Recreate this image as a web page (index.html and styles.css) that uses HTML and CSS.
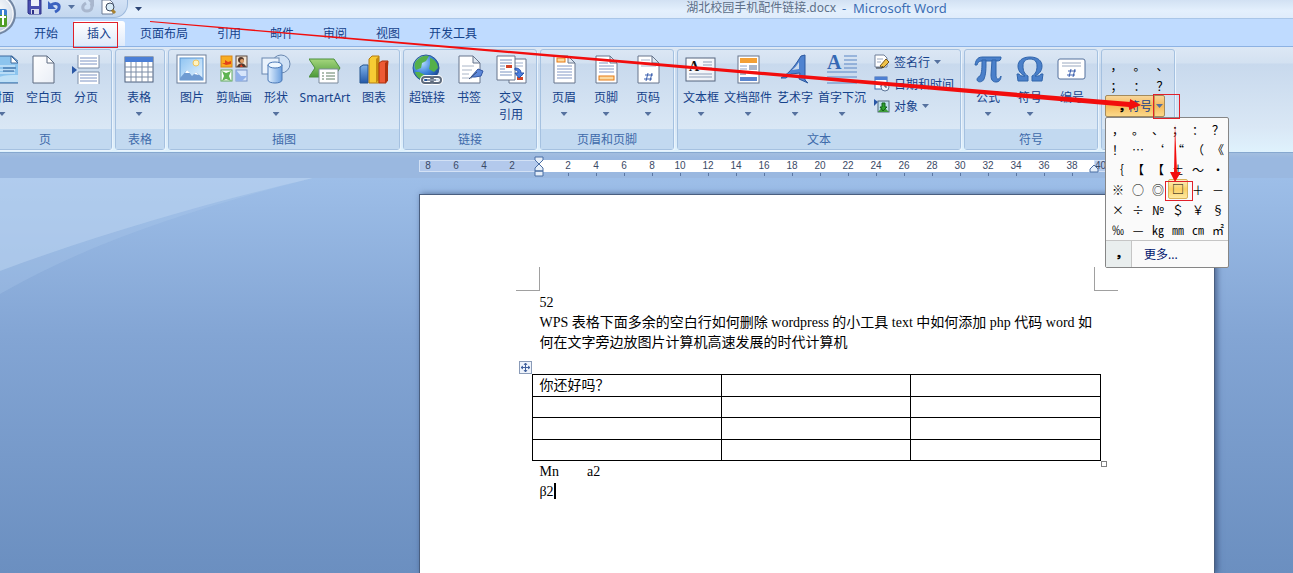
FILE: index.html
```html
<!DOCTYPE html>
<html lang="zh-CN">
<head>
    <meta charset="UTF-8">
    <meta name="viewport" content="width=device-width, initial-scale=1.0">
    <title>湖北校园手机配件链接.docx - Microsoft Word</title>
    <link rel="stylesheet" href="styles.css">
</head>
<body>
    <!-- Shared gradients -->
    <svg class="defs" width="0" height="0" aria-hidden="true">
        <defs>
            <linearGradient id="g-blue" x1="0" y1="0" x2="0" y2="1"><stop offset="0" stop-color="#7fb2ea"/><stop offset="1" stop-color="#2358a8"/></linearGradient>
            <linearGradient id="g-sky" x1="0" y1="0" x2="1" y2="1"><stop offset="0" stop-color="#8fc4f2"/><stop offset="1" stop-color="#e4f3ff"/></linearGradient>
            <linearGradient id="g-cyl" x1="0" y1="0" x2="1" y2="0"><stop offset="0" stop-color="#e3f1ff"/><stop offset="1" stop-color="#6a9fdf"/></linearGradient>
            <linearGradient id="g-green" x1="0" y1="0" x2="0" y2="1"><stop offset="0" stop-color="#a5d67d"/><stop offset="1" stop-color="#4c9a3a"/></linearGradient>
            <linearGradient id="g-paper" x1="0" y1="0" x2="1" y2="1"><stop offset="0" stop-color="#ffffff"/><stop offset="1" stop-color="#e9eef6"/></linearGradient>
            <radialGradient id="g-globe" cx="0.35" cy="0.3" r="0.8"><stop offset="0" stop-color="#b5dcff"/><stop offset="0.5" stop-color="#3f86dc"/><stop offset="1" stop-color="#123c86"/></radialGradient>
            <radialGradient id="g-orb" cx="0.5" cy="0.4" r="0.6"><stop offset="0" stop-color="#ffffff"/><stop offset="0.7" stop-color="#dbe3ee"/><stop offset="1" stop-color="#a9b8cc"/></radialGradient>
        </defs>
    </svg>

    <header class="titlebar">
        <button class="orb" type="button" aria-label="Office">
            <svg width="42" height="42" viewBox="0 0 42 42">
                <circle cx="21" cy="21" r="20" fill="url(#g-orb)" stroke="#7286a3" stroke-width="2"/>
                <circle cx="21" cy="21" r="18" fill="none" stroke="#fff"/>
                <rect x="20" y="16" width="13" height="9" rx="2" fill="#3b7fce"/>
                <rect x="22" y="22" width="11" height="12" rx="2" fill="#4f9d25"/>
                <path d="M29 17v15M24 24h8" fill="none" stroke="#fff" stroke-width="2"/>
            </svg>
        </button>
        <div class="quick-access">
            <button type="button" aria-label="保存">
                <svg width="16" height="16" viewBox="0 0 16 16"><path d="M2 0h13v14H3l-1-1z" fill="#4a4fb0" stroke="#2e3288"/><rect x="5" y="0" width="8" height="6" fill="#eef2fb"/><rect x="5" y="9" width="8" height="5" fill="#d5daec"/><rect x="6" y="10" width="2" height="4" fill="#2e3288"/></svg>
            </button>
            <button type="button" aria-label="撤消">
                <svg width="16" height="16" viewBox="0 0 16 16"><path d="M4 5c5-3 9-1 8 3 0 2-2 3-4 4" fill="none" stroke="#3a62c0" stroke-width="3"/><path d="M1 1v8h8z" fill="#3a62c0"/></svg>
            </button>
            <span class="arrow"></span>
            <button type="button" aria-label="重复">
                <svg width="16" height="16" viewBox="0 0 16 16"><path d="M6 3c-5 3-4 8 1 8s6-4 4-8" fill="none" stroke="#a9b7ce" stroke-width="3"/><path d="M8 0h6v7z" fill="#a9b7ce"/></svg>
            </button>
            <button type="button" aria-label="打印预览">
                <svg width="16" height="16" viewBox="0 0 16 16"><path d="M1 0h8l3 3v11H1z" fill="#fff" stroke="#6c7c97"/><circle cx="9" cy="7" r="4" fill="#d9ecf8" stroke="#3d4a60"/><path d="M11 10l3 3" stroke="#a98230" stroke-width="3"/></svg>
            </button>
        </div>
        <button class="customize" type="button" aria-label="自定义快速访问工具栏"><span class="arrow dark"></span></button>
        <h1 class="window-title"><span class="file-name">湖北校园手机配件链接.docx</span><span class="app-name">- &nbsp;Microsoft Word</span></h1>
    </header>

    <nav class="tabs">
        <button type="button">开始</button>
        <button type="button" class="active">插入</button>
        <button type="button">页面布局</button>
        <button type="button">引用</button>
        <button type="button">邮件</button>
        <button type="button">审阅</button>
        <button type="button">视图</button>
        <button type="button">开发工具</button>
    </nav>

    <section class="ribbon">
        <div class="group">
            <div class="tools">
                <button type="button" class="tool">
                    <svg viewBox="0 0 32 32"><path d="M4 2h22l8 7v20H4z" fill="#8cc4ee" stroke="#3f6a9e"/><path d="M25 2v7h7z" fill="#fff" stroke="#3f6a9e"/><path d="M7 12h22M7 16h22M7 19h22" stroke="#e6f4ff"/><path d="M17 14h13M17 17h11" stroke="#2c5c96"/><path d="M5 28c6-6 14-7 27-7v7z" fill="#bfe0f7"/></svg>
                    <span>封面</span><i class="arrow"></i>
                </button>
                <button type="button" class="tool">
                    <svg viewBox="0 0 32 32"><path d="M5 2h14l7 7v20H5z" fill="url(#g-paper)" stroke="#5d6b80"/><path d="M19 2v7h7z" fill="#fff" stroke="#5d6b80"/></svg>
                    <span>空白页</span>
                </button>
                <button type="button" class="tool">
                    <svg viewBox="0 0 32 32"><path d="M8 1h21v13H8zM8 18h21v12H8z" fill="#fff"/><path d="M8 1v13h21V1M8 30V18h21v12" fill="none" stroke="#7d8ea8"/><path d="M10 4h17M10 7h17M10 10h17M10 21h17M10 24h17M10 27h17" stroke="#7c94c4"/><path d="M2 12l5 4-5 4z" fill="#2a57a5"/></svg>
                    <span>分页</span>
                </button>
            </div>
            <h2>页</h2>
        </div>

        <div class="group">
            <div class="tools">
                <button type="button" class="tool">
                    <svg viewBox="0 0 32 32"><rect x="2" y="3" width="28" height="25" fill="#fff" stroke="#4c5f7d"/><rect x="2" y="3" width="28" height="5" fill="#4b7fd6"/><path d="M2 13h28M2 18h28M2 23h28M8 8v20M13 8v20M19 8v20M25 8v20" stroke="#7d8da6"/></svg>
                    <span>表格</span><i class="arrow"></i>
                </button>
            </div>
            <h2>表格</h2>
        </div>

        <div class="group">
            <div class="tools">
                <button type="button" class="tool">
                    <svg viewBox="0 0 32 32"><rect x="1" y="1" width="29" height="28" fill="#fff" stroke="#6d7f99"/><rect x="4" y="4" width="23" height="22" fill="url(#g-sky)" stroke="#5c95d0"/><circle cx="20" cy="9" r="3" fill="#fff3c0" stroke="#efc55e"/><path d="M4 24l7-8 5 6 4-4 7 6v2H4z" fill="#6f9bd2"/><path d="M9 19l2-3 3 3zM18 20l2-2 3 3z" fill="#fff"/></svg>
                    <span>图片</span>
                </button>
                <button type="button" class="tool">
                    <svg viewBox="0 0 32 32"><rect x="3" y="2" width="11" height="11" fill="#f8ad21" stroke="#d8861a"/><path d="M4 9h3V6l3 2 3-1v3l-5 1z" fill="#e1421a"/><rect x="18" y="2" width="11" height="11" fill="#f3e3cf" stroke="#5b4a42"/><circle cx="23" cy="6" r="3" fill="#54392c"/><circle cx="24" cy="7" r="2" fill="#e0a06a"/><path d="M19 13c1-5 8-5 9 0z" fill="#54392c"/><path d="M23 10l2 3h-3z" fill="#e2401e"/><rect x="3" y="16" width="11" height="11" fill="#fff" stroke="#5fa85a"/><path d="M4 17l4 2 5-2-2 5 2 5-5-2-4 2 2-5z" fill="#5fb552"/><rect x="18" y="16" width="11" height="11" fill="#d6e5fb" stroke="#7693c8"/><path d="M18 27V16l5 6 6 0-5 5z" fill="#8fb0ea"/></svg>
                    <span>剪贴画</span>
                </button>
                <button type="button" class="tool">
                    <svg viewBox="0 0 32 32"><circle cx="21" cy="10" r="9" fill="#cfe1f5" stroke="#6a88b0"/><rect x="2" y="4" width="17" height="16" fill="#e9f2fc" stroke="#6a88b0"/><path d="M8 11v15c0 4 14 4 14 0V11z" fill="url(#g-cyl)" stroke="#4a78b6"/><ellipse cx="15" cy="11" rx="7" ry="3" fill="#eef7ff" stroke="#4a78b6"/></svg>
                    <span>形状</span><i class="arrow"></i>
                </button>
                <button type="button" class="tool smart">
                    <svg viewBox="0 0 32 32"><path d="M0 5h25l6 9-6 9H0l6-9z" fill="url(#g-green)" stroke="#4c8f3d"/><path d="M10 15h19v14H10z" fill="#fff" stroke="#7c8b9c"/><path d="M13 19h2M13 22h2M13 25h2M17 19h9M17 22h9M17 25h9" stroke="#5e7f62"/></svg>
                    <span>SmartArt</span>
                </button>
                <button type="button" class="tool">
                    <svg viewBox="0 0 32 32"><path d="M2 13l3-2h5v18H2z" fill="url(#g-blue)" stroke="#25558f"/><path d="M11 5l3-3h7v27H11z" fill="#f7cb34" stroke="#b37a0e"/><path d="M18 5l3-3v24l-3 3z" fill="#c48910"/><path d="M21 9l3-2h6l-2 22h-7z" fill="#ee5a35" stroke="#a8300f"/><path d="M27 9l3-2v20l-3 2z" fill="#b0320f"/></svg>
                    <span>图表</span>
                </button>
            </div>
            <h2>插图</h2>
        </div>

        <div class="group">
            <div class="tools">
                <button type="button" class="tool">
                    <svg viewBox="0 0 32 32"><circle cx="15" cy="14" r="13" fill="url(#g-globe)" stroke="#2a5795"/><path d="M5 7c4-5 9-6 13-5l-3 5-4 2-1 5-5 2c-2-3-2-6 0-9zM19 4c5 1 8 6 8 10l-4 4-5-3 1-5zM8 18l6 3-2 5c-4-1-7-4-8-8z" fill="#55b04a"/><rect x="11" y="23" width="11" height="6" rx="3" fill="none" stroke="#fff" stroke-width="4"/><rect x="20" y="23" width="10" height="6" rx="3" fill="none" stroke="#fff" stroke-width="4"/><rect x="11" y="23" width="11" height="6" rx="3" fill="none" stroke="#5e6b7d" stroke-width="2"/><rect x="20" y="23" width="10" height="6" rx="3" fill="none" stroke="#5e6b7d" stroke-width="2"/><path d="M16 26h9" stroke="#8793a5" stroke-width="2"/></svg>
                    <span>超链接</span>
                </button>
                <button type="button" class="tool">
                    <svg viewBox="0 0 32 32"><path d="M6 2h14l7 7v20H6z" fill="#fff" stroke="#66758c"/><path d="M20 2v7h7z" fill="#dfe7f1" stroke="#66758c"/><path d="M9 12h12M9 16h10M9 20h7M9 24h10" stroke="#aab6c8"/><path d="M18 23l7-8 5 2-2 5-6 1z" fill="#5b86d8" stroke="#3056a4"/><path d="M16 25l8-7" stroke="#3b4f78"/></svg>
                    <span>书签</span>
                </button>
                <button type="button" class="tool">
                    <svg viewBox="0 0 32 32"><path d="M14 5h17v24H14z" fill="#fff" stroke="#66758c"/><path d="M18 9h10M18 12h10M18 21h10" stroke="#9fb1ce"/><rect x="22" y="23" width="6" height="3" fill="#d34427"/><path d="M2 2h18v24H2z" fill="#fff" stroke="#66758c"/><path d="M5 6h12M5 9h12M5 12h5M5 15h5M5 18h12M5 21h12" stroke="#7b93c0"/><rect x="11" y="11" width="6" height="3" fill="#d34427"/><path d="M20 14c4 0 6 2 6 5h3l-5 5-4-5h3c0-2-1-3-3-3z" fill="#4c7fe0" stroke="#2954ac" stroke-width="1"/></svg>
                    <span>交叉<br>引用</span>
                </button>
            </div>
            <h2>链接</h2>
        </div>

        <div class="group">
            <div class="tools">
                <button type="button" class="tool">
                    <svg viewBox="0 0 32 32"><path d="M6 2h14l7 7v20H6z" fill="#fff" stroke="#66758c"/><path d="M20 2v7h7z" fill="#dfe7f1" stroke="#66758c"/><rect x="9" y="4" width="8" height="4" fill="#fbd9a0" stroke="#e67a15"/><path d="M9 12h15M9 15h15M9 18h15M9 21h15M9 24h15" stroke="#8298c6"/></svg>
                    <span>页眉</span><i class="arrow"></i>
                </button>
                <button type="button" class="tool">
                    <svg viewBox="0 0 32 32"><path d="M6 2h14l7 7v20H6z" fill="#fff" stroke="#66758c"/><path d="M20 2v7h7z" fill="#dfe7f1" stroke="#66758c"/><path d="M9 6h9M9 9h9M9 12h15M9 15h15M9 18h15" stroke="#8298c6"/><rect x="9" y="22" width="15" height="4" fill="#fbd9a0" stroke="#e67a15"/></svg>
                    <span>页脚</span><i class="arrow"></i>
                </button>
                <button type="button" class="tool">
                    <svg viewBox="0 0 32 32"><path d="M6 2h14l7 7v20H6z" fill="#fff" stroke="#66758c"/><path d="M20 2v7h7z" fill="#dfe7f1" stroke="#66758c"/><path d="M9 6h9M9 9h9M9 12h15" stroke="#a5b3cd"/><path d="M16 19l-2 8M20 19l-2 8M13 21h8M12 25h8" stroke="#3b5fae"/></svg>
                    <span>页码</span><i class="arrow"></i>
                </button>
            </div>
            <h2>页眉和页脚</h2>
        </div>

        <div class="group">
            <div class="tools">
                <button type="button" class="tool">
                    <svg viewBox="0 0 32 32"><rect x="1" y="4" width="29" height="23" fill="url(#g-paper)" stroke="#55657e"/><path d="M18 8h9M18 11h9M18 14h9M4 20h23M4 23h23" stroke="#8f9fb9"/><text x="4" y="17" class="glyph letter">A</text></svg>
                    <span>文本框</span><i class="arrow"></i>
                </button>
                <button type="button" class="tool wide">
                    <svg viewBox="0 0 32 32"><rect x="6" y="2" width="21" height="27" fill="#fff" stroke="#66758c"/><rect x="8" y="4" width="17" height="5" fill="#f3a035"/><path d="M8 12h7M8 15h7M18 12h7M8 18h17" stroke="#8fa3c4"/><rect x="17" y="11" width="8" height="5" fill="#a9b6ca"/><rect x="8" y="17" width="6" height="4" fill="#a9b6ca"/><rect x="8" y="23" width="17" height="4" fill="#5b86cf"/></svg>
                    <span>文档部件</span><i class="arrow"></i>
                </button>
                <button type="button" class="tool">
                    <svg viewBox="0 0 32 32"><path d="M2 24C12 18 17 10 22 2l4-1v25l3 3-9-4 1-6-9 1-5 4z" fill="#4f83d0" stroke="#2c589f"/><path d="M13 16c3-2 5-5 7-8v7z" fill="#c9d9ec"/></svg>
                    <span>艺术字</span><i class="arrow"></i>
                </button>
                <button type="button" class="tool wide">
                    <svg viewBox="0 0 32 32"><text x="1" y="15" class="glyph drop-cap">A</text><path d="M18 2h13M18 6h13M18 10h13M18 14h13M1 18h30M1 23h30M1 29h30" stroke="#5b86c4"/></svg>
                    <span>首字下沉</span><i class="arrow"></i>
                </button>
                <div class="small-tools">
                    <button type="button">
                        <svg viewBox="0 0 16 16"><path d="M1 1h9l3 3v9H1z" fill="#fff" stroke="#6f7f98"/><path d="M3 5h6M3 8h4" stroke="#9aa8bf"/><path d="M6 12l6-7 3 3-6 6z" fill="#f0c247" stroke="#77561a"/><path d="M2 14h6l1-2" fill="none" stroke="#333"/></svg>
                        签名行<i class="arrow"></i>
                    </button>
                    <button type="button">
                        <svg viewBox="0 0 16 16"><rect x="1" y="1" width="12" height="12" fill="#fff" stroke="#3f68ae"/><rect x="1" y="1" width="12" height="3" fill="#4d7fd2"/><path d="M4 7h3v4M9 6v4" fill="none" stroke="#3f68ae"/><circle cx="11" cy="11" r="4" fill="#eef5fd" stroke="#5d7698"/><path d="M11 8v3h2" fill="none" stroke="#345"/></svg>
                        日期和时间
                    </button>
                    <button type="button">
                        <svg viewBox="0 0 16 16"><rect x="4" y="3" width="11" height="11" fill="#bfe0ee" stroke="#53687f"/><path d="M4 14l5-6 6 6z" fill="#3f9b3a"/><path d="M8 5h3v4h2l-4 4-3-4h2z" fill="#2fa12d" stroke="#12601a"/><path d="M0 1l4 3-4 4z" fill="#2a57a5"/></svg>
                        对象<i class="arrow"></i>
                    </button>
                </div>
            </div>
            <h2>文本</h2>
        </div>

        <div class="group">
            <div class="tools">
                <button type="button" class="tool">
                    <svg viewBox="0 0 32 32"><path d="M3 11c1-7 4-8 8-8h18c0 3-1 4-4 4H11c-4 0-5 1-6 4z" fill="#4a80ca" stroke="#2f64ab"/><path d="M10 6h4c0 9 0 14-2 19-1 3-6 4-7 1 0-2 1-3 3-4 2-3 2-9 2-16zM20 6h4v14c0 4 1 5 2 5s2-1 3-3c0 4-2 6-5 6-4 0-5-3-5-7z" fill="#4a80ca" stroke="#2f64ab"/></svg>
                    <span>公式</span><i class="arrow"></i>
                </button>
                <button type="button" class="tool">
                    <svg viewBox="0 0 32 32"><path d="M3 20h2c1 2 2 2 5 2h1c-4-2-7-5-7-10 0-5 4-9 12-9s12 4 12 9c0 5-3 8-7 10h1c3 0 4 0 5-2h2l-1 7H18v-5c4-2 5-6 5-10 0-4-2-7-7-7s-7 3-7 7c0 4 1 8 5 10v5H4z" fill="#4a80ca" stroke="#2f64ab"/></svg>
                    <span>符号</span><i class="arrow"></i>
                </button>
                <button type="button" class="tool">
                    <svg viewBox="0 0 32 32"><rect x="2" y="5" width="27" height="20" rx="2" fill="#fff" stroke="#55719c"/><path d="M6 9h19M6 12h19" stroke="#9aa9c0"/><path d="M15 15l-2 8M19 15l-2 8M12 17h8M11 21h8" stroke="#3b5fae"/></svg>
                    <span>编号</span>
                </button>
            </div>
            <h2>符号</h2>
        </div>

        <div class="group symbols">
            <div class="quick-symbols">
                <button type="button">，</button><button type="button">。</button><button type="button">、</button>
                <button type="button">；</button><button type="button">：</button><button type="button">？</button>
            </div>
            <div class="split">
                <button type="button" class="split-main"><b>❟</b>符号</button>
                <button type="button" class="split-arrow" aria-label="更多符号"><i class="arrow"></i></button>
                <div class="symbol-menu">
                    <div class="symbol-grid">
                        <button type="button">，</button><button type="button">。</button><button type="button">、</button><button type="button">；</button><button type="button">：</button><button type="button">？</button>
                        <button type="button">！</button><button type="button">…</button><button type="button">‘</button><button type="button">“</button><button type="button">（</button><button type="button">《</button>
                        <button type="button">｛</button><button type="button">【</button><button type="button">【</button><button type="button">±</button><button type="button">～</button><button type="button">·</button>
                        <button type="button">※</button><button type="button">○</button><button type="button">◎</button><button type="button" class="hot">□</button><button type="button">＋</button><button type="button">－</button>
                        <button type="button">×</button><button type="button">÷</button><button type="button">№</button><button type="button">＄</button><button type="button">￥</button><button type="button">§</button>
                        <button type="button">‰</button><button type="button">—</button><button type="button">㎏</button><button type="button">㎜</button><button type="button">㎝</button><button type="button">㎡</button>
                    </div>
                    <button type="button" class="more"><b>❟</b><span>更多...</span></button>
                </div>
            </div>
            <h2></h2>
        </div>
    </section>

    <div class="ruler-row">
        <div class="ruler">
            <div class="ruler-margin"><span>8</span><span>6</span><span>4</span><span>2</span></div>
            <div class="ruler-body">
                <span>2</span><span>4</span><span>6</span><span>8</span><span>10</span><span>12</span><span>14</span><span>16</span><span>18</span><span>20</span><span>22</span><span>24</span><span>26</span><span>28</span><span>30</span><span>32</span><span>34</span><span>36</span><span>38</span>
                <svg class="indent indent-left" width="10" height="22" viewBox="0 0 10 22"><path d="M1 1h8v3l-4 4-4-4zM5 8l4 4v3H1v-3zM1 15h8v5H1z" fill="#e6effa" stroke="#4b6ea3"/></svg>
                <svg class="indent indent-right" width="10" height="9" viewBox="0 0 10 9"><path d="M5 1l4 4v3H1V5z" fill="#e6effa" stroke="#4b6ea3"/></svg>
            </div>
            <div class="ruler-margin right">40</div>
        </div>
    </div>

    <main class="workspace">
        <svg class="swoosh" width="313" height="116" viewBox="0 0 313 116">
            <path d="M0 0h313C220 24 100 58 0 116z" fill="#b5d0ee" opacity="0.25"/>
            <path d="M0 0h313C220 22 110 52 0 93z" fill="#bdd6f1" opacity="0.5"/>
        </svg>
        <article class="page">
            <span class="corner corner-left"></span>
            <span class="corner corner-right"></span>
            <p>52</p>
            <p>WPS 表格下面多余的空白行如何删除 wordpress 的小工具 text 中如何添加 php 代码 word 如何在文字旁边放图片计算机高速发展的时代计算机</p>
            <div class="table-wrap">
                <svg class="move-handle" width="13" height="13" viewBox="0 0 13 13"><rect x="0.5" y="0.5" width="12" height="12" fill="#eef3fb" stroke="#8a9bb8"/><path d="M6.5 2v9M2 6.5h9M5 4l1.500-2L8 4M5 9l1.500 2L8 9M4 5L2 6.500 4 8M9 5l2 1.500L9 8" fill="none" stroke="#3f5f9c"/></svg>
                <table>
                    <tr><td>你还好吗？</td><td></td><td></td></tr>
                    <tr><td></td><td></td><td></td></tr>
                    <tr><td></td><td></td><td></td></tr>
                    <tr><td></td><td></td><td></td></tr>
                </table>
                <span class="resize-handle"></span>
            </div>
            <p>Mn<span class="tabbed">a2</span></p>
            <p>β2<span class="caret"></span></p>
        </article>
    </main>

    <!-- Red callouts over the window -->
    <svg class="callouts" width="1293" height="573" viewBox="0 0 1293 573" aria-hidden="true">
        <rect x="73.5" y="22.500" width="44" height="25" fill="none" stroke="#e0202a"/>
        <path d="M150 21L680 65 1130 102v-3l11 6-12 5v-3L680 68 150 22z" fill="#f20d0d"/>
        <rect x="1153.5" y="94.500" width="26" height="24" fill="none" stroke="#e0202a"/>
        <path d="M1175 124l2 48h4l-6 10-5-10h4z" fill="#f20d0d"/>
        <rect x="1165.5" y="181.500" width="27" height="19" fill="none" stroke="#e0202a"/>
    </svg>
</body>
</html>
```

FILE: styles.css
```css
* {
    margin: 0;
    padding: 0;
    box-sizing: border-box;
}

body {
    position: relative;
    display: flex;
    flex-direction: column;
    min-height: 100vh;
    overflow: hidden;
    background: #9ab8e0;
    color: #15428b;
    font-family: "Noto Sans", "Noto Sans CJK SC", sans-serif;
    font-size: 12px;
    line-height: 17px;
}

button {
    border: none;
    background: none;
    color: inherit;
    font: inherit;
    white-space: nowrap;
}

svg {
    display: block;
    flex: none;
}

.defs {
    position: absolute;
}

.arrow {
    display: block;
    width: 7px;
    height: 4px;
    background: #55719f;
    clip-path: polygon(0 0, 100% 0, 50% 100%);
}

/* Title bar */
.titlebar {
    position: relative;
    display: flex;
    height: 19px;
    padding-left: 15px;
    background: linear-gradient(#d2e1f3, #e4f0fd 60%, #dfecfb);
    border-bottom: 1px solid #a9c6e8;
}

.orb {
    position: absolute;
    left: -26px;
    top: -7px;
    z-index: 2;
}

.quick-access {
    display: flex;
    align-items: flex-start;
    gap: 5px;
    height: 18px;
    padding: 0 10px 0 11px;
    background: linear-gradient(#d3e2f5, #c3d7ef);
    border: 1px solid #9db9dc;
    border-width: 0 1px 1px 0;
    border-radius: 0 0 14px 0;
}

.quick-access .arrow {
    margin-top: 5px;
}

.customize {
    width: 21px;
    padding-left: 7px;
}

.arrow.dark {
    background: #2b4474;
}

.window-title {
    position: absolute;
    left: 340px;
    right: 0;
    display: flex;
    justify-content: center;
    gap: 6px;
    line-height: 16px;
    font-weight: 400;
}

.file-name {
    color: #5d6f88;
    font-size: 12px;
}

.app-name {
    color: #3c6eb4;
    font-size: 13px;
}

/* Tabs */
.tabs {
    display: flex;
    gap: 1px;
    height: 28px;
    padding: 2px 0 0 20px;
    background: #bfdbff;
    border-bottom: 1px solid #8db2e3;
}

.tabs button {
    padding: 0 14px;
}

.tabs .active {
    background: linear-gradient(#ffffff, #dfeafa);
    border-radius: 3px 3px 0 0;
}

/* Ribbon */
.ribbon {
    display: flex;
    gap: 3px;
    height: 106px;
    margin-left: -22px;
    padding: 2px 0 2px;
    background: linear-gradient(#dde8f5, #d3e1f1 16px, #c8d9ed 17px, #d9e7f5 80px, #dff2fd);
    border-bottom: 1px solid #86a8cf;
}

.group {
    display: flex;
    flex-direction: column;
    border: 1px solid #a5c1e0;
    border-radius: 3px;
    box-shadow: 1px 1px 0 #eaf4fd;
}

.tools {
    display: flex;
    flex: 1;
    padding: 0 4px 0 2px;
}

.group h2 {
    height: 20px;
    background: #c2d9f0;
    color: #3e6aaa;
    font-size: 12px;
    line-height: 22px;
    font-weight: 400;
    text-align: center;
}

.tool {
    display: flex;
    flex-direction: column;
    align-items: center;
    width: 42px;
    padding-top: 4px;
}

.tool.wide {
    width: 52px;
}

.tool.smart {
    width: 56px;
}

.tool svg {
    width: 32px;
    height: 32px;
    margin-bottom: 3px;
}

.tool .arrow {
    margin-top: 6px;
}

.glyph {
    font-family: "Liberation Serif", serif;
    font-weight: 700;
}

.letter {
    fill: #111;
    font-size: 14px;
}

.drop-cap {
    fill: #3569b4;
    font-size: 20px;
}

.small-tools {
    display: flex;
    flex-direction: column;
    width: 88px;
    padding: 1px 0 0 6px;
}

.small-tools button {
    display: flex;
    align-items: center;
    gap: 4px;
    height: 22px;
}

.small-tools svg {
    width: 16px;
    height: 16px;
}

/* Custom symbol group */
.symbols {
    width: 74px;
    padding: 5px 0 0 3px;
}

.quick-symbols {
    display: grid;
    grid-template-columns: repeat(3, 23px);
    grid-auto-rows: 20px;
    color: #000;
}

.symbols h2 {
    margin: auto 0 0 -3px;
}

.split {
    position: relative;
    display: flex;
    width: 60px;
    height: 22px;
    background: linear-gradient(#f7d69a, #f5b95a 50%, #fbd98a);
    border: 1px solid #a48b5c;
    border-radius: 2px;
}

.split-main {
    display: flex;
    align-items: center;
    justify-content: flex-end;
    gap: 4px;
    width: 48px;
    padding-right: 2px;
}

.split-main b,
.more b {
    color: #000;
    font-family: "DejaVu Sans", sans-serif;
    font-size: 10px;
}

.split-arrow {
    display: flex;
    flex: 1;
    align-items: center;
    justify-content: center;
    border-left: 1px solid #c99a4c;
}

.symbol-menu {
    position: absolute;
    top: 21px;
    left: -1px;
    z-index: 5;
    width: 124px;
    background: #fafafa;
    border: 1px solid #868686;
    border-radius: 2px;
}

.symbol-grid {
    display: grid;
    grid-template-columns: repeat(6, 20px);
    grid-auto-rows: 20px;
    padding: 1px 0 1px 2px;
    color: #000;
}

.symbol-grid button,
.quick-symbols button {
    font-family: "Noto Sans CJK SC", sans-serif;
}

.symbol-grid .hot {
    background: linear-gradient(#fdf0c4, #fbcf64 50%, #fde9a0);
    border: 1px solid #d8b45c;
    border-radius: 2px;
    line-height: 16px;
}

.more {
    display: flex;
    align-items: center;
    width: 100%;
    height: 27px;
    border-top: 1px solid #c5c5c5;
    color: #00156e;
}

.more b {
    width: 26px;
    line-height: 26px;
    background: #e9eeee;
    border-right: 1px solid #c5c5c5;
}

.more span {
    padding-left: 12px;
}

/* Ruler */
.ruler-row {
    display: flex;
    justify-content: center;
    height: 25px;
    padding: 7px 0 0 340px;
    background: linear-gradient(#a3bedf, #9ab8e0 5px);
}

.ruler {
    display: flex;
    width: 100%;
    max-width: 795px;
    height: 12px;
    color: #3b4a66;
    font-family: "Liberation Sans", sans-serif;
    font-size: 10px;
    line-height: 12px;
}

.ruler span {
    position: relative;
    flex: none;
    width: 28px;
    text-align: center;
}

.ruler-margin {
    display: flex;
    justify-content: flex-end;
    width: 121px;
    padding-right: 13px;
    overflow: hidden;
    background: #b3c9ec;
    border: 1px solid #d3e1f5;
    line-height: 10px;
}

.ruler-margin.right {
    justify-content: flex-start;
    width: 120px;
}

.ruler-body {
    position: relative;
    display: flex;
    flex: 1;
    padding-left: 14px;
    background: #fff;
}

.ruler-body span::after {
    content: "";
    position: absolute;
    left: 14px;
    top: 13px;
    width: 1px;
    height: 3px;
    background: #5b77a3;
}

.indent {
    position: absolute;
}

.indent-left {
    left: -6px;
    top: -4px;
}

.indent-right {
    right: -5px;
    top: 4px;
}

/* Document */
.workspace {
    position: relative;
    display: flex;
    flex: 1;
    justify-content: center;
    padding: 16px 0 0 340px;
    background: linear-gradient(#9dbee8, #83a5d4 40%, #6b8fc0);
}

.swoosh {
    position: absolute;
    left: 0;
    top: 0;
}

.page {
    position: relative;
    width: 100%;
    max-width: 796px;
    padding: 98px 120px 0;
    background: #fff;
    border: 1px solid #4a5f80;
    border-bottom: none;
    box-shadow: 2px 0 6px rgba(30, 50, 90, 0.6);
    color: #000;
    font-family: "Liberation Serif", "Noto Sans CJK SC", serif;
    font-size: 14px;
    line-height: 20px;
}

.corner {
    position: absolute;
    top: 72px;
    width: 24px;
    height: 24px;
    border-bottom: 1px solid #a0a0a0;
}

.corner-left {
    left: 96px;
    border-right: 1px solid #a0a0a0;
}

.corner-right {
    right: 96px;
    border-left: 1px solid #a0a0a0;
}

.table-wrap {
    position: relative;
    margin: 21px -7px 1px -8px;
}

.page table {
    width: 100%;
    border-collapse: collapse;
    table-layout: fixed;
}

.page td {
    height: 21px;
    padding: 0 7px;
    border: 1px solid #000;
}

.page tr:nth-child(odd) td {
    height: 22px;
}

.move-handle {
    position: absolute;
    left: -13px;
    top: -13px;
}

.resize-handle {
    position: absolute;
    right: -6px;
    bottom: -6px;
    width: 6px;
    height: 6px;
    border: 1px solid #808080;
}

.tabbed {
    margin-left: 28px;
}

.caret {
    display: inline-block;
    width: 2px;
    height: 16px;
    background: #000;
    vertical-align: -3px;
}

.callouts {
    position: absolute;
    left: 0;
    top: 0;
    z-index: 10;
    pointer-events: none;
}
```
